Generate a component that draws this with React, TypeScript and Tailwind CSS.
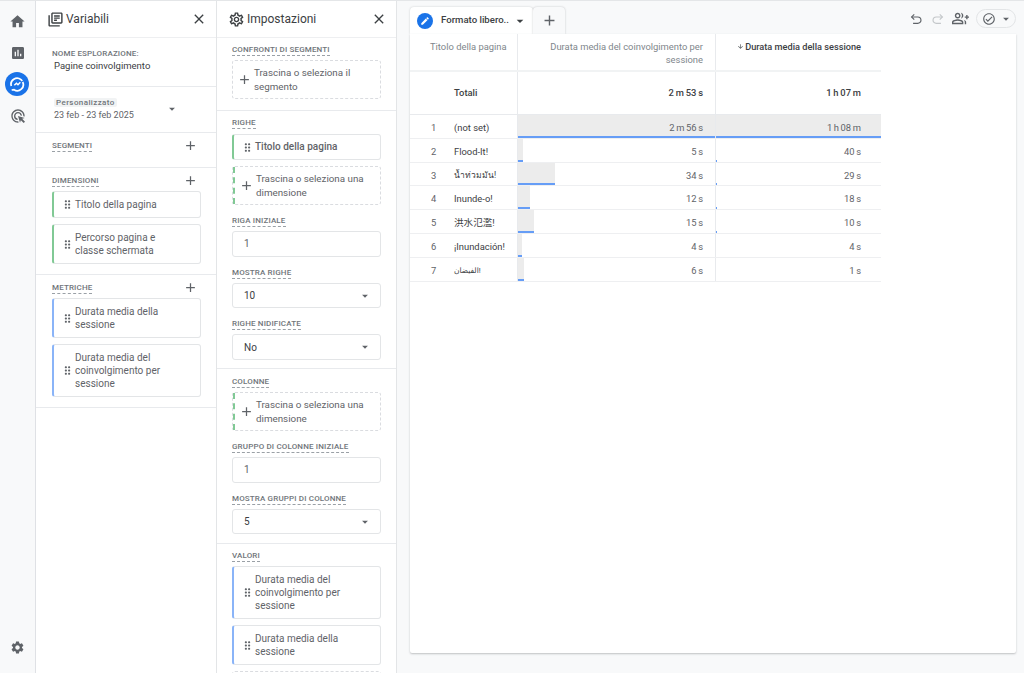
import React from "react";
import {
  MdHome, MdInsertChart, MdOutlineAdsClick, MdOutlineSettings, MdSettings, MdClose, MdAdd, MdDragIndicator,
  MdOutlineLibraryBooks, MdOutlineGroupAdd, MdOutlineCheckCircle, MdArrowDropDown, MdEdit, MdArrowDownward,
} from "react-icons/md";

function Label({ children }: { children: React.ReactNode }) {
  return (
    <div className="flex h-[12px] items-start">
      <span className="border-b border-dashed border-[#9aa0a6] pb-[1px] text-[8px] leading-[9px] font-medium tracking-[0.15px] text-[#70757a] uppercase">
        {children}
      </span>
    </div>
  );
}

function Chip({ lines, color, h, bold }: { lines: string[]; color: string; h: number; bold?: boolean }) {
  return (
    <div
      className={`flex items-center rounded-[3px] border border-l-[2px] border-[#e3e5e7] bg-white ${color}`}
      style={{ height: h }}
    >
      <MdDragIndicator className="ml-[7px] h-[13px] w-[13px] shrink-0 text-[#5f6368]" />
      <div className={`ml-[1px] text-[10px] leading-[13.3px] text-[#5f6368] ${bold ? "font-medium" : ""}`}>
        {lines.map((l) => (
          <div key={l}>{l}</div>
        ))}
      </div>
    </div>
  );
}

function Drop({ lines, green }: { lines: string[]; green?: boolean }) {
  return (
    <div className="flex h-[39px] items-center rounded-[3px] border border-dashed border-[#dadce0]">
      {green && <div className="h-full border-l-2 border-dashed border-[#81c995]" />}
      <MdAdd className={`h-[15px] w-[15px] shrink-0 text-[#5f6368] ${green ? "ml-[4px]" : "ml-[4px]"}`} />
      <div className="ml-[2px] text-[9.8px] leading-[13.3px] text-[#5f6368]">
        {lines.map((l) => (
          <div key={l}>{l}</div>
        ))}
      </div>
    </div>
  );
}

function Field({ value, select }: { value: string; select?: boolean }) {
  return (
    <div className="flex h-[25.7px] items-center justify-between rounded-[3px] border border-[#e3e5e7] bg-white pr-[8px] pl-[11px] text-[10px] text-[#5f6368]">
      <span className={select ? "text-[#3c4043]" : ""}>{value}</span>
      {select && <MdArrowDropDown className="h-[14px] w-[14px] text-[#5f6368]" />}
    </div>
  );
}

const Divider = () => <div className="h-px shrink-0 bg-[#e8eaed]" />;

function PanelHead({ icon, title }: { icon: React.ReactNode; title: string }) {
  return (
    <div className="flex h-[37px] shrink-0 items-center justify-between border-b border-[#eeeff1] pr-[9px] pl-[11px]">
      <div className="flex items-center gap-[2px]">
        {icon}
        <span className="text-[12px] leading-none text-[#3c4043]">{title}</span>
      </div>
      <MdClose className="h-[16px] w-[16px] text-[#3c4043]" />
    </div>
  );
}

function SecHead({ title }: { title: string }) {
  return (
    <div className="flex items-start justify-between pr-[3px]">
      <Label>{title}</Label>
      <MdAdd className="mt-[-3px] h-[15px] w-[15px] text-[#5f6368]" />
    </div>
  );
}

const rows = [
  { n: "1", t: "(not set)", a: "2 m 56 s", b: "1 h 08 m", full: true, w: 0, bw: 0, c: "" },
  { n: "2", t: "Flood-It!", a: "5 s", b: "40 s", w: 5, bw: 2, c: "" },
  { n: "3", t: "น้ำท่วมมัน!", a: "34 s", b: "29 s", w: 37, bw: 1, c: "text-[8.5px]" },
  { n: "4", t: "Inunde-o!", a: "12 s", b: "18 s", w: 12, bw: 1, c: "" },
  { n: "5", t: "洪水氾濫!", a: "15 s", b: "10 s", w: 16, bw: 1, c: "text-[9.6px]" },
  { n: "6", t: "¡Inundación!", a: "4 s", b: "4 s", w: 4, bw: 0, c: "" },
  { n: "7", t: "الفيضان!", a: "6 s", b: "1 s", w: 6, bw: 0, c: "text-[7.5px]" },
];

export default function App() {
  return (
    <div
      className="flex h-[673px] w-[1024px] overflow-hidden border-t border-[#e4e6e8] bg-[#f8f9fa] text-[#5f6368]"
      style={{ fontFamily: 'Roboto, "Noto Sans CJK SC", "DejaVu Sans", sans-serif' }}
    >
      {/* Rail */}
      <div className="flex w-[36px] shrink-0 flex-col items-center border-r border-[#dfe1e5] bg-[#f8f9fa] pt-[12px] pb-[18px]">
        <MdHome className="h-[17px] w-[17px] text-[#5f6368]" />
        <MdInsertChart className="mt-[15px] h-[16px] w-[16px] text-[#5f6368]" />
        <div className="mt-[11px] mr-[1px] flex h-[24px] w-[24px] items-center justify-center rounded-full bg-[#1a73e8]">
          <svg viewBox="0 0 24 24" className="h-[16px] w-[16px]" fill="none" stroke="#fff" strokeWidth="2.6">
            <path d="M3.5 15a9 9 0 0 1 14.5-9.5l2 2" />
            <path d="M20.5 9a9 9 0 0 1-13 11.5L4 21" />
            <path d="M8 14l3.2-3.2 2.3 2.3L17 9.5" strokeWidth="2.2" />
          </svg>
        </div>
        <MdOutlineAdsClick className="mt-[12px] h-[16px] w-[16px] text-[#5f6368]" />
        <div className="flex-1" />
        <MdSettings className="h-[15px] w-[15px] text-[#5f6368]" />
      </div>

      {/* Variabili */}
      <div className="flex w-[181px] shrink-0 flex-col border-r border-[#e3e5e7] bg-white">
        <PanelHead icon={<MdOutlineLibraryBooks className="h-[17px] w-[17px] text-[#3c4043]" />} title="Variabili" />
        <div className="h-[48px] shrink-0 pt-[11px] pl-[16px]">
          <div className="text-[8px] leading-[10px] font-medium tracking-[0.15px] text-[#70757a]">NOME ESPLORAZIONE:</div>
          <div className="pl-[2px] text-[9.5px] leading-[13px] text-[#3c4043]">Pagine coinvolgimento</div>
        </div>
        <Divider />
        <div className="flex h-[45px] shrink-0 items-start justify-between pt-[11px] pr-[37px] pl-[18px]">
          <div>
            <div className="w-fit rounded-[2px] bg-[#f1f3f4] px-[2px] text-[8px] leading-[9px] font-medium tracking-[0.4px] text-[#70757a]">
              Personalizzato
            </div>
            <div className="mt-[2px] text-[9px] leading-[12px] text-[#5f6368]">23 feb - 23 feb 2025</div>
          </div>
          <MdArrowDropDown className="mt-[4px] h-[14px] w-[14px] text-[#5f6368]" />
        </div>
        <Divider />
        <div className="h-[34px] shrink-0 pt-[8px] pr-[15px] pl-[16px]">
          <SecHead title="Segmenti" />
        </div>
        <Divider />
        <div className="h-[106px] shrink-0 pt-[8px] pr-[15px] pl-[16px]">
          <SecHead title="Dimensioni" />
          <div className="mt-[3px] flex flex-col gap-[6px]">
            <Chip lines={["Titolo della pagina"]} color="border-l-[#81c995]" h={27} />
            <Chip lines={["Percorso pagina e", "classe schermata"]} color="border-l-[#81c995]" h={40} />
          </div>
        </div>
        <Divider />
        <div className="h-[132px] shrink-0 pt-[8px] pr-[15px] pl-[16px]">
          <SecHead title="Metriche" />
          <div className="mt-[3px] flex flex-col gap-[6px]">
            <Chip lines={["Durata media della", "sessione"]} color="border-l-[#8ab4f8]" h={40} />
            <Chip lines={["Durata media del", "coinvolgimento per", "sessione"]} color="border-l-[#8ab4f8]" h={53} />
          </div>
        </div>
        <Divider />
      </div>

      {/* Impostazioni */}
      <div className="flex w-[180px] shrink-0 flex-col border-r border-[#e3e5e7] bg-white">
        <PanelHead icon={<MdOutlineSettings className="h-[17px] w-[17px] text-[#3c4043]" />} title="Impostazioni" />
        <div className="h-[72px] shrink-0 pt-[7px] pr-[15px] pl-[15px]">
          <Label>Confronti di segmenti</Label>
          <div className="mt-[3px]">
            <Drop lines={["Trascina o seleziona il", "segmento"]} />
          </div>
        </div>
        <Divider />
        <div className="h-[257px] shrink-0 pt-[7px] pr-[15px] pl-[15px]">
          <Label>Righe</Label>
          <div className="mt-[4px]">
            <Chip lines={["Titolo della pagina"]} color="border-l-[#81c995]" h={26} bold />
          </div>
          <div className="mt-[6px]">
            <Drop lines={["Trascina o seleziona una", "dimensione"]} green />
          </div>
          <div className="mt-[11px]"><Label>Riga iniziale</Label></div>
          <div className="mt-[3px]"><Field value="1" /></div>
          <div className="mt-[11px]"><Label>Mostra righe</Label></div>
          <div className="mt-[3px]"><Field value="10" select /></div>
          <div className="mt-[11px]"><Label>Righe nidificate</Label></div>
          <div className="mt-[3px]"><Field value="No" select /></div>
        </div>
        <Divider />
        <div className="h-[174px] shrink-0 pt-[8px] pr-[15px] pl-[15px]">
          <Label>Colonne</Label>
          <div className="mt-[3px]">
            <Drop lines={["Trascina o seleziona una", "dimensione"]} green />
          </div>
          <div className="mt-[11px]"><Label>Gruppo di colonne iniziale</Label></div>
          <div className="mt-[3px]"><Field value="1" /></div>
          <div className="mt-[11px]"><Label>Mostra gruppi di colonne</Label></div>
          <div className="mt-[3px]"><Field value="5" select /></div>
        </div>
        <Divider />
        <div className="flex flex-col pt-[7px] pr-[15px] pl-[15px]">
          <Label>Valori</Label>
          <div className="mt-[3px] flex flex-col gap-[6px]">
            <Chip lines={["Durata media del", "coinvolgimento per", "sessione"]} color="border-l-[#8ab4f8]" h={53} />
            <Chip lines={["Durata media della", "sessione"]} color="border-l-[#8ab4f8]" h={40} />
            <div className="h-[30px] rounded-[3px] border border-dashed border-[#dadce0]" />
          </div>
        </div>
      </div>

      {/* Main */}
      <div className="flex min-w-0 flex-1 flex-col pr-[8px] pl-[13px]">
        <div className="flex h-[33px] shrink-0 items-end justify-between">
          <div className="flex">
            <div className="flex h-[27px] w-[123px] items-center rounded-t-[4px] bg-white pl-[7px] shadow-[0_0_2px_rgba(60,64,67,0.25)]">
              <div className="flex h-[16px] w-[16px] items-center justify-center rounded-full bg-[#1a73e8]">
                <MdEdit className="h-[10px] w-[10px] text-white" />
              </div>
              <span className="ml-[8px] text-[9.6px] font-medium text-[#3c4043]">Formato libero..</span>
              <MdArrowDropDown className="ml-[3px] h-[16px] w-[16px] text-[#3c4043]" />
            </div>
            <div className="flex h-[27px] w-[32px] items-center justify-center rounded-t-[4px] bg-[#f8f9fa] shadow-[0_0_2px_rgba(60,64,67,0.3)]">
              <MdAdd className="h-[17px] w-[17px] text-[#5f6368]" />
            </div>
          </div>
          <div className="mb-[6px] flex items-center">
            <svg viewBox="0 0 24 24" className="h-[14px] w-[14px]" fill="none" stroke="#5f6368" strokeWidth="2">
              <path d="M9 4L4.5 8.5 9 13" />
              <path d="M4.5 8.5H15a5.5 5.5 0 0 1 0 11H7" />
            </svg>
            <svg viewBox="0 0 24 24" className="ml-[8px] h-[14px] w-[14px]" fill="none" stroke="#c4c7ca" strokeWidth="2">
              <path d="M15 4l4.5 4.5L15 13" />
              <path d="M19.5 8.5H9a5.5 5.5 0 0 0 0 11h8" />
            </svg>
            <MdOutlineGroupAdd className="ml-[7px] h-[17px] w-[17px] text-[#5f6368]" />
            <div className="ml-[7px] flex h-[19px] w-[40px] items-center rounded-full border border-[#e3e5e7] pl-[5px]">
              <MdOutlineCheckCircle className="h-[14px] w-[14px] text-[#5f6368]" />
              <MdArrowDropDown className="ml-[3px] h-[14px] w-[14px] text-[#5f6368]" />
            </div>
          </div>
        </div>

        <div className="h-[619px] shrink-0 rounded-b-[2px] bg-white shadow-[0_1px_2px_rgba(60,64,67,0.3)]">
          <div className="w-[471px] text-[9.4px] text-[#5f6368]">
            {/* Header */}
            <div className="flex h-[38px] border-b-2 border-[#f1f3f4]">
              <div className="w-[108px] border-r border-[#e8eaed] pt-[6px] pl-[20px] leading-[13.3px] text-[#80868b]">Titolo della pagina</div>
              <div className="w-[198px] border-r border-[#e8eaed] pt-[6px] pr-[12px] text-right leading-[13.3px] text-[#80868b]">
                Durata media del coinvolgimento per sessione
              </div>
              <div className="flex-1 pt-[6px] pr-[20px] text-right text-[9.2px] leading-[13.3px] font-medium text-[#3c4043]">
                <MdArrowDownward className="mr-[1px] inline h-[7px] w-[7px] align-baseline" />
                Durata media della sessione
              </div>
            </div>
            {/* Totals */}
            <div className="flex h-[43px] items-center border-b border-[#e8eaed] font-medium text-[#3c4043]">
              <div className="flex h-full w-[108px] items-center border-r border-[#e8eaed] pl-[44px]">Totali</div>
              <div className="flex h-full w-[198px] items-center justify-end border-r border-[#e8eaed] pr-[12px] [word-spacing:-0.5px]">2 m 53 s</div>
              <div className="flex-1 pr-[20px] text-right [word-spacing:-0.5px]">1 h 07 m</div>
            </div>
            {/* Rows */}
            {rows.map((r) => (
              <div key={r.n} className="flex h-[23.8px] border-b border-[#eeeff1] leading-[25px]">
                <div className="flex w-[108px] border-r border-[#e8eaed]">
                  <span className="w-[44px] pl-[21px]">{r.n}</span>
                  <span className={`whitespace-nowrap text-[#3c4043] ${r.c}`}>{r.t}</span>
                </div>
                <div className={`relative w-[198px] border-r border-[#e8eaed] pr-[12px] text-right [word-spacing:-0.7px] ${r.full ? "bg-[#ececec]" : ""}`}>
                  {r.full ? (
                    <div className="absolute right-0 bottom-0 left-0 h-[2px] bg-[#669df6]" />
                  ) : (
                    <div className="absolute top-0 bottom-0 left-0 border-b-2 border-[#669df6] bg-[#ececec]" style={{ width: r.w }} />
                  )}
                  <span className="relative">{r.a}</span>
                </div>
                <div className={`relative flex-1 pr-[20px] text-right [word-spacing:-0.7px] ${r.full ? "bg-[#ececec]" : ""}`}>
                  {r.full ? (
                    <div className="absolute right-0 bottom-0 left-0 h-[2px] bg-[#669df6]" />
                  ) : r.bw > 0 ? (
                    <div className="absolute bottom-0 left-0 h-[2px] w-px bg-[#669df6]" />
                  ) : null}
                  <span className="relative">{r.b}</span>
                </div>
              </div>
            ))}
          </div>
        </div>
      </div>
    </div>
  );
}
